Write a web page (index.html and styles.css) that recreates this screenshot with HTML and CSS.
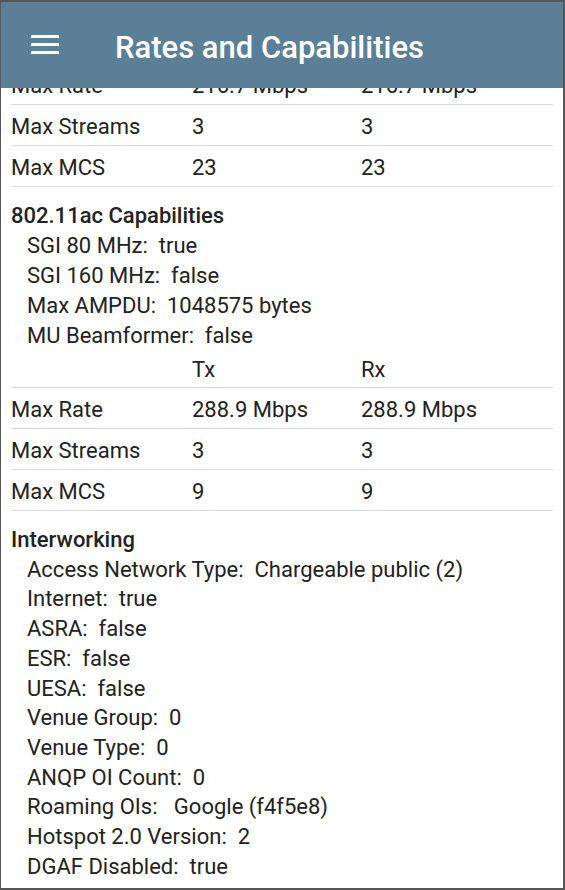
FILE: index.html
```html
<!DOCTYPE html>
<html>
<head>
<meta charset="utf-8">
<link rel="stylesheet" href="styles.css">
</head>
<body>
<div class="frame">
  <header class="appbar">
    <svg class="menu" width="28" height="20" viewBox="0 0 28 20" aria-hidden="true">
      <rect x="0" y="0" width="28" height="3" fill="#fff"/>
      <rect x="0" y="8" width="28" height="3" fill="#fff"/>
      <rect x="0" y="16" width="28" height="3" fill="#fff"/>
    </svg>
    <h1 class="title">Rates and Capabilities</h1>
  </header>
  <main class="content">
    <div class="scroll">
      <div class="table first">
        <div class="row"><span>Max Rate</span><span>216.7 Mbps</span><span>216.7 Mbps</span></div>
        <div class="row"><span>Max Streams</span><span>3</span><span>3</span></div>
        <div class="row"><span>Max MCS</span><span>23</span><span>23</span></div>
      </div>

      <section class="section">
        <div class="section-title">802.11ac Capabilities</div>
        <div class="item">SGI 80 MHz:  true</div>
        <div class="item">SGI 160 MHz:  false</div>
        <div class="item">Max AMPDU:  1048575 bytes</div>
        <div class="item">MU Beamformer:  false</div>
      </section>

      <div class="table">
        <div class="row head"><span></span><span>Tx</span><span>Rx</span></div>
        <div class="row"><span>Max Rate</span><span>288.9 Mbps</span><span>288.9 Mbps</span></div>
        <div class="row"><span>Max Streams</span><span>3</span><span>3</span></div>
        <div class="row"><span>Max MCS</span><span>9</span><span>9</span></div>
      </div>

      <section class="section iw">
        <div class="section-title">Interworking</div>
        <div class="item">Access Network Type:  Chargeable public (2)</div>
        <div class="item">Internet:  true</div>
        <div class="item">ASRA:  false</div>
        <div class="item">ESR:  false</div>
        <div class="item">UESA:  false</div>
        <div class="item">Venue Group:  0</div>
        <div class="item">Venue Type:  0</div>
        <div class="item">ANQP OI Count:  0</div>
        <div class="item">Roaming OIs:   Google (f4f5e8)</div>
        <div class="item">Hotspot 2.0 Version:  2</div>
        <div class="item">DGAF Disabled:  true</div>
      </section>
    </div>
  </main>
</div>
</body>
</html>
```

FILE: styles.css
```css
* { box-sizing: border-box; }
html, body { margin: 0; padding: 0; }
body {
  width: 565px;
  height: 890px;
  overflow: hidden;
  font-family: Roboto, "Noto Sans", sans-serif;
  color: #222222;
  background: #ffffff;
}
.frame {
  width: 565px;
  height: 890px;
  border-style: solid;
  border-color: #555555;
  border-width: 2px 2px 2px 1px;
  display: flex;
  flex-direction: column;
  overflow: hidden;
}
.appbar {
  flex: 0 0 86px;
  height: 86px;
  background: #5b7f96;
  display: flex;
  align-items: center;
  padding-left: 30px;
  position: relative;
  z-index: 1;
}
.menu { display: block; flex: 0 0 28px; }
.title {
  margin: 4px 0 0 56px;
  font-size: 31px;
  font-weight: 500;
  color: #ffffff;
  letter-spacing: 0;
  line-height: 1;
}
.content {
  flex: 1;
  overflow: hidden;
}
.scroll { margin-top: -24px; }
.table { margin: 0 10px; }
.row {
  display: grid;
  grid-template-columns: 181px 169px 1fr;
  height: 41px;
  padding-top: 3px;
  line-height: 37px;
  font-size: 22px;
  border-bottom: 1px solid #d9d9d9;
  white-space: nowrap;
}
.row.head { height: 37px; padding-top: 1px; line-height: 35px; }
.section {
  padding: 14px 10px 0;
  font-size: 22px;
  line-height: 30px;
}
.section-title { font-weight: 500; }
.item { padding-left: 16px; white-space: pre; }
.iw { padding-top: 14px; line-height: 29.7px; }
```
